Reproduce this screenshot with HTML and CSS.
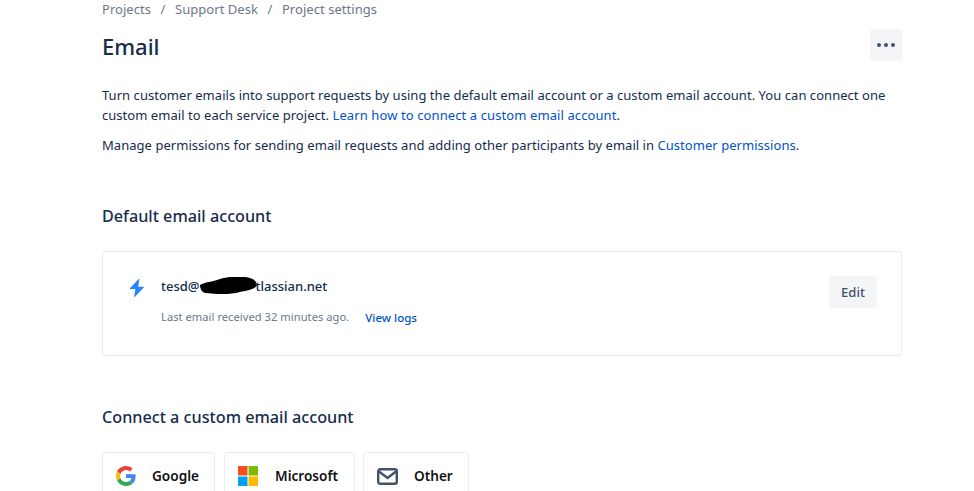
FILE: index.html
```html
<!DOCTYPE html>
<html lang="en">
<head>
<meta charset="utf-8">
<title>Email</title>
<link rel="stylesheet" href="styles.css">
</head>
<body>
<main class="page">
  <nav class="crumbs"><a>Projects</a><span class="sep">/</span><a>Support Desk</a><span class="sep">/</span><a>Project settings</a></nav>
  <header class="head">
    <h1>Email</h1>
    <button class="more" aria-label="More"><span></span><span></span><span></span></button>
  </header>
  <p class="intro">Turn customer emails into support requests by using the default email account or a custom email account. You can connect one custom email to each service project. <a class="link learn">Learn how to connect a custom email account</a>.</p>
  <p class="intro second">Manage permissions for sending email requests and adding other participants by email in <a class="link">Customer permissions</a>.</p>
  <h2 class="default-title">Default email account</h2>
  <section class="card">
    <svg class="bolt" width="16" height="18" viewBox="0 0 16 18"><path fill="#2684ff" d="M9.600 0 1 9.200c-.3.400 0 .9.400.9h5L5.200 17.600c-.1.400.3.600.6.300l8.900-9.300c.3-.3.100-.8-.4-.8H9.200L10.300.4C10.400 0 9.900-.2 9.600 0z"/></svg>
    <div class="info">
      <div class="addr">tesd@<svg class="scribble" width="57" height="17" viewBox="0 0 57 17"><path fill="#000" d="M0 8C5 5 12 5 20 2 30-1 45-1 50 1 54 2 57 5 57 8 55 13 45 14 40 15 30 18 15 17 5 16 2 15 0 12 0 8z"/></svg>tlassian.net</div>
      <div class="meta"><span class="last">Last email received 32 minutes ago.</span><a class="link logs">View logs</a></div>
    </div>
    <button class="edit">Edit</button>
  </section>
  <h2 class="custom-title">Connect a custom email account</h2>
  <div class="providers">
    <button class="provider google">
      <svg width="20" height="20" viewBox="0 0 48 48"><path fill="#ea4335" d="M24 9.500c3.500 0 6.700 1.200 9.200 3.600l6.900-6.900C35.900 2.400 30.500 0 24 0 14.600 0 6.500 5.400 2.600 13.200l8 6.200C12.500 13.700 17.800 9.500 24 9.500z"/><path fill="#4285f4" d="M47 24.500c0-1.600-.1-3.100-.4-4.500H24v9h13c-.6 3-2.200 5.500-4.800 7.200l7.700 6C44.400 38 47 31.900 47 24.500z"/><path fill="#fbbc05" d="M10.500 28.600c-.5-1.400-.8-3-.8-4.600s.3-3.200.8-4.600l-8-6.200C1 16.400 0 20.100 0 24s1 7.600 2.600 10.800l7.900-6.200z"/><path fill="#34a853" d="M24 48c6.500 0 11.900-2.100 15.900-5.800l-7.700-6c-2.200 1.400-4.900 2.300-8.200 2.300-6.200 0-11.500-4.200-13.400-9.900l-8 6.200C6.500 42.600 14.600 48 24 48z"/></svg>
      <span>Google</span>
    </button>
    <button class="provider microsoft">
      <svg width="20" height="20" viewBox="0 0 20 20"><rect width="9.500" height="9.500" fill="#f25022"/><rect x="10.500" width="9.500" height="9.500" fill="#7fba00"/><rect y="10.500" width="9.500" height="9.500" fill="#00a4ef"/><rect x="10.500" y="10.500" width="9.500" height="9.500" fill="#ffb900"/></svg>
      <span>Microsoft</span>
    </button>
    <button class="provider other">
      <svg width="21" height="17" viewBox="0 0 21 17"><rect x="1.200" y="1.200" width="18.600" height="14.600" rx="2" fill="none" stroke="#42526e" stroke-width="2.400"/><path d="M2 3.500l8.500 6.500L19 3.500" fill="none" stroke="#42526e" stroke-width="2.400"/></svg>
      <span>Other</span>
    </button>
  </div>
</main>
</body>
</html>
```
FILE: styles.css
```css
* { box-sizing: border-box; }
html, body { margin: 0; height: 100%; overflow: hidden; background: #fff; }
body { font-family: "Noto Sans", "Open Sans", sans-serif; font-size: 13px; letter-spacing: 0.04px; line-height: 20px; color: #172b4d; }
.page { width: 800px; margin-left: 102px; }
.crumbs { display: flex; height: 20px; line-height: 18px; color: #6b778c; }
.sep { width: 24px; text-align: center; }
.head { display: flex; justify-content: space-between; align-items: flex-start; margin-top: 9px; height: 32px; }
h1 { margin: 0; font-size: 22px; line-height: 34px; font-weight: 500; letter-spacing: 0; color: #172b4d; }
.more { display: flex; gap: 3px; align-items: center; justify-content: center; width: 32px; height: 32px; padding: 0; border: 0; border-radius: 3px; background: #f4f5f7; }
.more span { width: 4px; height: 4px; border-radius: 50%; background: #42526e; }
.intro { margin: 24px 0 0; color: #172b4d; }
.intro.second { margin-top: 10px; }
.link { color: #0052cc; }
.learn { letter-spacing: 0.1px; }
h2 { margin: 0; font-size: 16.200px; line-height: 24px; font-weight: 500; letter-spacing: 0; color: #172b4d; }
.default-title { margin-top: 49px; }
.card { display: flex; align-items: flex-start; height: 105px; margin-top: 23px; padding: 24px 24px 0 26px; border: 1px solid #ebecf0; border-radius: 3px; }
.bolt { margin-top: 3px; flex: none; }
.info { flex: 1; margin-left: 16px; }
.addr { font-size: 13px; font-weight: 500; line-height: 20px; letter-spacing: 0; }
.scribble { margin: -6px -1px -1px 0; vertical-align: -2px; }
.meta { display: flex; align-items: flex-end; margin-top: 13px; font-size: 11.150px; line-height: 16px; }
.last { color: #6b778c; }
.logs { margin-left: 16px; font-size: 11.500px; font-weight: 500; letter-spacing: 0; transform: translateY(1px); }
.edit { width: 48px; height: 32px; padding: 0; border: 0; border-radius: 3px; background: #f4f5f7; color: #42526e; font: 500 13px "Noto Sans", sans-serif; }
.custom-title { margin-top: 49px; }
.providers { display: flex; gap: 9px; margin-top: 23px; }
.provider { display: flex; align-items: center; gap: 16px; flex: none; height: 48px; padding: 0 0 0 13px; background: #fff; border: 1px solid #ebecf0; border-radius: 3px; font: 600 13.600px "Noto Sans", sans-serif; color: #111; }
.provider span { margin-bottom: 2px; }
.google { width: 113px; }
.microsoft { width: 131px; gap: 17px; }
.microsoft + .other { margin-left: -1px; }
.other { width: 106px; }
```
